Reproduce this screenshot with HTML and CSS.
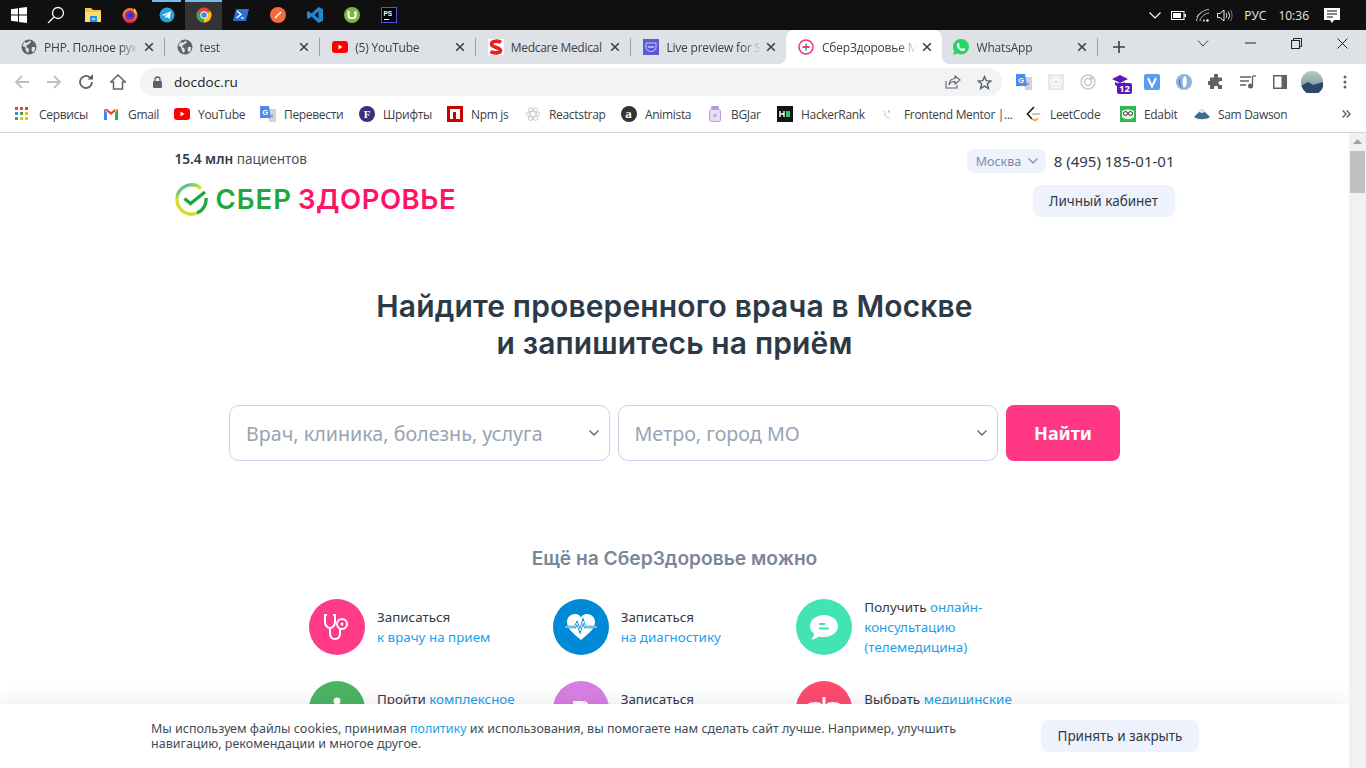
FILE: index.html
```html
<!DOCTYPE html>
<html lang="ru">
<head>
<meta charset="utf-8">
<title>СберЗдоровье</title>
<link rel="stylesheet" href="styles.css">
</head>
<body>
<div class="screen">
  <div class="taskbar">
    <div class="tb-cell"><svg width="16" height="16" viewBox="0 0 16 16" fill="#fff"><path d="M0 2.2 7 1.2V7.5H0zM8 1 16 0V7.5H8zM0 8.5H7V14.800L0 13.800zM8 8.500H16V16L8 15z"/></svg></div>
    <div class="tb-cell"><svg width="18" height="18" viewBox="0 0 18 18" fill="none" stroke="#fff" stroke-width="1.300"><circle cx="11" cy="7" r="5.500"/><path d="M7 11 1 17"/></svg></div>
    <div class="tb-cell"><svg width="18" height="16" viewBox="0 0 18 16"><path d="M1 1H7L9 3H17V15H1z" fill="#f6c544"/><path d="M1 5H17V15H1z" fill="#fbdc70"/><path d="M6 9H13V15H6z" fill="#2b8fd8"/><path d="M8 11H11V13H8z" fill="#9fd3f4"/></svg></div>
    <div class="tb-cell"><svg width="16" height="16" viewBox="0 0 16 16"><circle cx="8" cy="8.500" r="7.500" fill="#ff7a1f"/><path d="M12 1c2 2 3 4 3 6l-3-1z" fill="#ffc21f"/><circle cx="8" cy="8.500" r="5" fill="#7b2fd0"/><path d="M1 9C1 15 6 16 8 16c4 0 7-3 7-7-1 3-3 5-7 5-3 0-5-2-7-5z" fill="#e3174f"/><circle cx="8.500" cy="8" r="2.500" fill="#4a2bb8"/></svg></div>
    <div class="tb-cell tb-open"><svg width="16" height="16" viewBox="0 0 16 16"><circle cx="8" cy="8" r="7.500" fill="#2aa1da"/><path d="M3 8 12 4.300 10.500 12 7.700 10 6.300 11.300 6.200 9.200 10 5.800 5.200 8.800z" fill="#fff"/></svg></div>
    <div class="tb-cell tb-open tb-active"><svg width="16" height="16" viewBox="0 0 16 16"><circle cx="8" cy="8" r="7.500" fill="#e8453c"/><path d="M8 8 14.500 4.300A7.500 7.500 0 0 1 8 15.500z" fill="#fbc116"/><path d="M8 8 8 15.500A7.500 7.500 0 0 1 1.500 4.300z" fill="#34a853"/><circle cx="8" cy="8" r="3.700" fill="#fff"/><circle cx="8" cy="8" r="2.800" fill="#4285f4"/></svg></div>
    <div class="tb-cell"><svg width="16" height="14" viewBox="0 0 16 14"><path d="M3 1H16L13 13H0z" fill="#2f6fd0"/><path d="M4 3 8 6.500 3.500 10" fill="none" stroke="#fff" stroke-width="1.300"/><path d="M8 10H11" stroke="#fff" stroke-width="1.200"/></svg></div>
    <div class="tb-cell"><svg width="16" height="16" viewBox="0 0 16 16"><circle cx="8" cy="8" r="8" fill="#f26c3d"/><path d="M5 11 11 5" stroke="#fff" stroke-width="1.500"/></svg></div>
    <div class="tb-cell"><svg width="16" height="16" viewBox="0 0 16 16"><path d="M11.500 0 16 2.200V13.800L11.500 16 4.500 9.500 1.500 12 0 11V5L1.500 4 4.500 6.500zM11.500 4.500 7.500 8 11.500 11.500z" fill="#1f8ad2"/></svg></div>
    <div class="tb-cell"><svg width="16" height="16" viewBox="0 0 16 16"><circle cx="8" cy="8" r="8" fill="#76b83f"/><path d="M4.500 4V9C4.500 12 11.500 12 11.500 9V5" fill="none" stroke="#fff" stroke-width="2"/><path d="M10 6 11.500 3.500 13 6z" fill="#fff"/></svg></div>
    <div class="tb-cell"><svg width="16" height="16" viewBox="0 0 16 16"><rect x=".5" y=".5" width="15" height="15" fill="#000" stroke="#5a50e8"/><path d="M3 12.500H8" stroke="#fff"/><text x="2.500" y="8.500" class="ps-text">PS</text></svg></div>
    <div class="tray">
      <svg class="tray-chev" width="12" height="7" viewBox="0 0 12 7" fill="none" stroke="#fff" stroke-width="1.100"><path d="M.5.500 6 6 11.500.500"/></svg>
      <svg class="tray-batt" width="15" height="9" viewBox="0 0 15 9"><rect x=".5" y=".5" width="12.500" height="8" fill="none" stroke="#fff"/><rect x="2" y="2" width="8" height="5" fill="#fff"/><rect x="13.500" y="3" width="1.500" height="3" fill="#fff"/></svg>
      <svg class="tray-wifi" width="14" height="13" viewBox="0 0 14 13" fill="none" stroke="#bbb"><path d="M.5 8C3 5 3.500 4.500 6 3"/><path d="M.5 12C1 6 7 .5 13 .5"/><path d="M4 12C4 9 8 4.500 13 4"/><circle cx="11.500" cy="11.500" r="1.200" fill="#fff" stroke="none"/><circle cx="8" cy="11.500" r="1" fill="#ddd" stroke="none"/></svg>
      <svg class="tray-vol" width="16" height="13" viewBox="0 0 16 13" fill="none" stroke="#fff" stroke-width=".9"><path d="M.5 4.500H3L7 1V12L3 8.500H.5z"/><path d="M9 4C10 5.500 10 7.500 9 9"/><path d="M11 2.500C13 5 13 8 11 10.500"/><path d="M13.500 1C15.500 4.500 15.500 8.500 13.500 12" stroke="#888"/></svg>
      <span class="tray-lang">РУС</span>
      <span class="tray-time">10:36</span>
      <svg class="tray-note" width="16" height="15" viewBox="0 0 16 15"><path d="M0 0H16V12H10L8 15 6 12H0z" fill="#fff"/><path d="M3 3H13M3 6H13M3 9H9" stroke="#111"/></svg>
    </div>
  </div>

  <div class="tabstrip">
    <div class="tab">
      <svg class="fav" viewBox="0 0 16 16"><use href="#globe"/></svg>
      <span class="tab-title">PHP. Полное руководство</span><svg class="tab-x" viewBox="0 0 10 10"><use href="#x"/></svg>
    </div>
    <div class="tab">
      <svg class="fav" viewBox="0 0 16 16"><use href="#globe"/></svg>
      <span class="tab-title">test</span><svg class="tab-x" viewBox="0 0 10 10"><use href="#x"/></svg>
    </div>
    <div class="tab">
      <svg class="fav" viewBox="0 0 16 16"><use href="#yt"/></svg>
      <span class="tab-title">(5) YouTube</span><svg class="tab-x" viewBox="0 0 10 10"><use href="#x"/></svg>
    </div>
    <div class="tab">
      <svg class="fav" viewBox="0 0 16 16"><rect width="16" height="16" fill="#fff"/><path d="M13 3.500C10.500 1.500 4 1.500 3.500 5S12.500 8.500 12.500 11.500 5.500 14.500 2.500 12.500" fill="none" stroke="#e1251b" stroke-width="3.600"/></svg>
      <span class="tab-title tab-title-full">Medcare Medical</span><svg class="tab-x" viewBox="0 0 10 10"><use href="#x"/></svg>
    </div>
    <div class="tab tab-last">
      <svg class="fav" viewBox="0 0 16 16"><rect width="16" height="16" fill="#5b5bd6"/><path d="M3 4H13V8C13 14 3 14 3 8z" fill="none" stroke="#c7c9f5"/><path d="M5 8H11" stroke="#fff"/></svg>
      <span class="tab-title">Live preview for Sber</span><svg class="tab-x" viewBox="0 0 10 10"><use href="#x"/></svg>
    </div>
    <div class="tab tab-active">
      <svg class="fav" viewBox="0 0 16 16"><circle cx="8" cy="8" r="7" fill="none" stroke="#ff2d78" stroke-width="1.500"/><path d="M8 4.500V11.500" stroke="#2dc6e8" stroke-width="2"/><path d="M4.500 8H11.500" stroke="#ff2d78" stroke-width="2"/></svg>
      <span class="tab-title">СберЗдоровье Москва</span><svg class="tab-x" viewBox="0 0 10 10"><use href="#x"/></svg>
    </div>
    <div class="tab tab-wa">
      <svg class="fav" viewBox="0 0 16 16"><path d="M8 0a8 7.800 0 0 1 0 15.600c-1.300 0-2.600-.3-3.800-1L0 16l1.300-4A8 7.800 0 0 1 8 0z" fill="#2bd366"/><path d="M5 4c1-.8 1.500 1.500 1.700 2 .1.500-.7 1-.5 1.400.7 1.200 1.500 2 2.700 2.500.5.100.9-.9 1.300-.8.500.2 2 .8 2 1.200 0 1.500-2 2-3 1.600C6.500 11.200 4.700 9.500 4 7.200 3.700 6 4 4.800 5 4z" fill="#fff"/></svg>
      <span class="tab-title">WhatsApp</span><svg class="tab-x" viewBox="0 0 10 10"><use href="#x"/></svg>
    </div>
    <svg class="tab-plus" width="12" height="12" viewBox="0 0 12 12"><path d="M6 0V12M0 6H12" stroke="#3c4043" stroke-width="1.600"/></svg>
    <div class="win-btns">
      <svg class="win-chev" width="12" height="7" viewBox="0 0 12 7" fill="none" stroke="#3c4043"><path d="M1 .5 6 6 11 .5"/></svg>
      <svg width="11" height="2" viewBox="0 0 11 2"><path d="M0 1H11" stroke="#222"/></svg>
      <svg width="11" height="11" viewBox="0 0 11 11" fill="none" stroke="#222"><rect x=".5" y="2.500" width="8" height="8"/><path d="M2.500 2.500V.5H10.500V8.500H8.500"/></svg>
      <svg width="11" height="11" viewBox="0 0 11 11" stroke="#222"><path d="M.5.500 10.500 10.500M10.500.500 .5 10.500"/></svg>
    </div>
  </div>

  <div class="toolbar">
    <svg class="nav nav-off" viewBox="0 0 16 16"><path d="M15 8H2M8 2 2 8l6 6" fill="none" stroke-width="1.800"/></svg>
    <svg class="nav nav-off" viewBox="0 0 16 16"><path d="M1 8H14M8 2l6 6-6 6" fill="none" stroke-width="1.800"/></svg>
    <svg class="nav" viewBox="0 0 16 16"><path d="M14 8A6 6 0 1 1 12 3.500" fill="none" stroke-width="1.800"/><path d="M9.500 5.500H15V0z" fill="#5f6368" stroke="none"/></svg>
    <svg class="nav" viewBox="0 0 16 16"><path d="M8 1 .8 8H3.500V15H12.500V8H15.200z" fill="none" stroke-width="1.500"/></svg>
    <div class="omnibox">
      <svg class="lock" width="10" height="12" viewBox="0 0 10 12"><rect y="5" width="9" height="7" rx="1" fill="#5f6368"/><path d="M2 5V3.500a2.500 2.500 0 0 1 5 0V5" fill="none" stroke="#5f6368" stroke-width="1.300"/></svg>
      <span class="url">docdoc.ru</span>
      <svg class="omni-share" width="16" height="14" viewBox="0 0 16 14" fill="none" stroke="#5f6368" stroke-width="1.100"><path d="M1 6V13H12V10"/><path d="M10 1 15 5 10 9V6.500C7 6.500 5 7.500 4 10 4 6 6.500 3.800 10 3.500z"/></svg>
      <svg class="omni-star" width="15" height="15" viewBox="0 0 15 15" fill="none" stroke="#5f6368" stroke-width="1.400"><path d="M7.500 1.500 9.300 5.700 13.800 6 10.300 9 11.400 13.500 7.500 11.100 3.600 13.500 4.700 9 1.200 6 5.700 5.700z"/></svg>
    </div>
    <div class="exts">
      <svg class="ext" viewBox="0 0 16 16"><use href="#gt"/></svg>
      <svg class="ext" viewBox="0 0 16 16"><rect width="16" height="16" fill="#e8e8e8"/><g fill="none" stroke="#fff"><ellipse cx="8" cy="8" rx="6.500" ry="2.500"/><ellipse cx="8" cy="8" rx="6.500" ry="2.500" transform="rotate(60 8 8)"/><ellipse cx="8" cy="8" rx="6.500" ry="2.500" transform="rotate(120 8 8)"/></g></svg>
      <svg class="ext" viewBox="0 0 16 16" fill="none" stroke="#c8c8c8" stroke-width="1.500"><circle cx="8" cy="8" r="7"/><circle cx="8" cy="8" r="3.500"/><circle cx="11" cy="4.500" r="1" fill="#aaa"/></svg>
      <div class="ext ext-badge"><svg class="ext" viewBox="0 0 16 16"><path d="M8 1 16 5 8 9 0 5z" fill="#5a17b8"/><path d="M3 8V11L8 13.500 13 11V8L8 10.500z" fill="#5a17b8"/></svg><span class="badge">12</span></div>
      <svg class="ext" viewBox="0 0 16 16"><rect width="16" height="16" rx="2" fill="#5a9cf0"/><path d="M4 4 8 12.500 12 4" fill="none" stroke="#fff" stroke-width="2"/></svg>
      <svg class="ext" viewBox="0 0 16 16"><circle cx="8" cy="8" r="8" fill="#8fb3dc"/><path d="M9 2C6 4 6 11 8 14 11 12 12 5 9 2z" fill="#fff"/><path d="M4 4C2 7 3 12 6 14 4 11 4 7 4 4z" fill="#3f72b5"/></svg>
      <svg class="ext" viewBox="0 0 16 16"><path d="M6 1.500a2 2 0 0 1 4 0V3.500H14V7h-1.500a2 2 0 0 0 0 4H14v4H10v-1.300a2 2 0 0 0-4 0V15H2V11H.8a2 2 0 0 1 0-4H2V3.500H6z" fill="#5f6368"/></svg>
      <svg class="ext" viewBox="0 0 16 16"><path d="M0 3H11M0 7H9M0 11H6" stroke="#5f6368" stroke-width="1.300"/><path d="M12.500 2V12" stroke="#5f6368" stroke-width="1.300"/><path d="M12.500 2H16" stroke="#5f6368" stroke-width="1.300"/><circle cx="10.500" cy="12" r="2.500" fill="#5f6368"/></svg>
      <svg class="ext" viewBox="0 0 16 16"><path d="M1 1H15V15H1zM2.500 2.500V13.500H9.500V2.500z" fill="#5f6368" fill-rule="evenodd"/><rect x="10" y="2" width="4" height="12" fill="#5f6368"/></svg>
      <svg class="avatar" viewBox="0 0 22 22"><defs><linearGradient id="sky" x1="0" y1="0" x2="0" y2="1"><stop offset="0" stop-color="#b7c9c8"/><stop offset=".55" stop-color="#8ea7ad"/><stop offset="1" stop-color="#33506e"/></linearGradient></defs><circle cx="11" cy="11" r="11" fill="url(#sky)"/><path d="M0 15 7 11 12 14 22 11V16A11 11 0 0 1 1 16z" fill="#2f4767"/></svg>
      <svg class="menu" width="4" height="14" viewBox="0 0 4 14" fill="#5f6368"><circle cx="2" cy="2" r="1.500"/><circle cx="2" cy="7" r="1.500"/><circle cx="2" cy="12" r="1.500"/></svg>
    </div>
  </div>

  <div class="bookmarks">
    <div class="bm"><svg class="bm-ic" viewBox="0 0 16 16"><g><rect x="0" y="1" width="3" height="3" fill="#ea4335"/><rect x="5" y="1" width="3" height="3" fill="#ea4335"/><rect x="10" y="1" width="3" height="3" fill="#ea4335"/><rect x="0" y="6" width="3" height="3" fill="#4285f4"/><rect x="5" y="6" width="3" height="3" fill="#34a853"/><rect x="10" y="6" width="3" height="3" fill="#fbbc05"/><rect x="0" y="11" width="3" height="3" fill="#34a853"/><rect x="5" y="11" width="3" height="3" fill="#fbbc05"/><rect x="10" y="11" width="3" height="3" fill="#fbbc05"/></g></svg>Сервисы</div>
    <div class="bm"><svg class="bm-ic" viewBox="0 0 16 16"><path d="M0 3V14H3V7z" fill="#4285f4"/><path d="M14 3V14H11V7z" fill="#34a853"/><path d="M0 3 7 9 14 3 11 3 7 6 3 3z" fill="#ea4335"/><path d="M11 3H14L11 7z" fill="#fbbc05"/></svg>Gmail</div>
    <div class="bm"><svg class="bm-ic" viewBox="0 0 16 16"><use href="#yt"/></svg>YouTube</div>
    <div class="bm"><svg class="bm-ic" viewBox="0 0 16 16"><use href="#gt"/></svg>Перевести</div>
    <div class="bm"><svg class="bm-ic" viewBox="0 0 16 16"><circle cx="8" cy="8" r="8" fill="#3d2e78"/><text x="4.700" y="12" class="f-text">F</text></svg>Шрифты</div>
    <div class="bm"><svg class="bm-ic" viewBox="0 0 16 16"><path d="M0 0H16V16H0zM3 3V13H6V6H9V13H13V3z" fill="#cb0000" fill-rule="evenodd"/></svg>Npm js</div>
    <div class="bm"><svg class="bm-ic" viewBox="0 0 16 16"><g fill="none" stroke="#c5ced6"><ellipse cx="8" cy="8" rx="7" ry="2.800"/><ellipse cx="8" cy="8" rx="7" ry="2.800" transform="rotate(60 8 8)"/><ellipse cx="8" cy="8" rx="7" ry="2.800" transform="rotate(120 8 8)"/></g></svg>Reactstrap</div>
    <div class="bm"><svg class="bm-ic" viewBox="0 0 16 16"><circle cx="8" cy="8" r="8" fill="#333"/><text x="4.300" y="12" class="a-text">a</text></svg>Animista</div>
    <div class="bm"><svg class="bm-ic" viewBox="0 0 16 16"><rect x="4" y="0" width="8" height="3" rx="1" fill="#b69ae0"/><rect x="2.500" y="3.500" width="11" height="12" rx="2" fill="#e8dcf8" stroke="#b69ae0"/><circle cx="8" cy="9.500" r="1.500" fill="#b69ae0"/></svg>BGJar</div>
    <div class="bm"><svg class="bm-ic" viewBox="0 0 16 16"><rect width="16" height="16" fill="#0d141c"/><path d="M3 5V11M7 5V11M3 8H7" stroke="#fff" stroke-width="1.400"/><rect x="9" y="5" width="4" height="6" fill="#2ec866"/></svg>HackerRank</div>
    <div class="bm"><svg class="bm-ic" viewBox="0 0 16 16" fill="none" stroke="#b7c5e0"><path d="M5 5C4 9 6 12 10 12"/><path d="M9 4V7M8 5.500H10" stroke="#8fd0e8"/></svg>Frontend Mentor |...</div>
    <div class="bm"><svg class="bm-ic" viewBox="0 0 16 16" fill="none"><path d="M8 1 1.500 8 6 13" stroke="#222" stroke-width="1.700"/><path d="M6 13 9.500 14.500 12 12" stroke="#f89f1b" stroke-width="1.700"/><path d="M6 8H14" stroke="#b3b3b3" stroke-width="1.500"/></svg>LeetCode</div>
    <div class="bm"><svg class="bm-ic" viewBox="0 0 16 16"><rect width="16" height="16" fill="#2fb84f"/><path d="M2 5C5 3 11 3 14 5V11C11 14 5 14 2 11z" fill="#eef3e9"/><g fill="none" stroke="#333"><circle cx="5.500" cy="7.500" r="2"/><circle cx="10.500" cy="7.500" r="2"/></g></svg>Edabit</div>
    <div class="bm"><svg class="bm-ic" viewBox="0 0 16 16"><path d="M0 11 8 3 16 11C12 14 4 14 0 11z" fill="#3c6f8f"/><path d="M5 6 8 3 11 6 8 7z" fill="#e8eef2"/></svg>Sam Dawson</div>
    <svg class="bm-more" width="9" height="8" viewBox="0 0 9 8" fill="none" stroke="#5f6368" stroke-width="1.400"><path d="M.7.500 4 4 .7 7.500M4.700.500 8 4 4.700 7.500"/></svg>
  </div>

  <div class="viewport">
    <main class="page">
      <div class="wrap">
        <header class="head">
          <div class="head-left">
            <p class="patients"><b>15.4 млн</b> пациентов</p>
            <div class="logo">
              <svg width="33" height="33" viewBox="0 0 33 33"><defs><linearGradient id="ring2" x1="0" y1="0" x2="1" y2="1"><stop offset="0" stop-color="#12a8e0"/><stop offset=".55" stop-color="#d6e42a"/><stop offset="1" stop-color="#f2e52a"/></linearGradient></defs><path d="M26 5.500A14.500 14.500 0 0 0 2 16.500" fill="none" stroke="url(#ring2)" stroke-width="3.400"/><path d="M2 16.500A14.500 14.500 0 0 0 22 30" fill="none" stroke="#d7dd2b" stroke-width="3.400"/><path d="M22 30A14.500 14.500 0 0 0 31 15" fill="none" stroke="#1ea83c" stroke-width="3.400"/><path d="M9.500 15.500 15.500 20.500 30 9" fill="none" stroke="#1ea83c" stroke-width="3.400"/></svg>
              <span class="logo-a">СБЕР</span><span class="logo-b">ЗДОРОВЬЕ</span>
            </div>
          </div>
          <div class="head-right">
            <div class="head-contact">
              <div class="city">Москва<svg width="10" height="6" viewBox="0 0 10 6" fill="none" stroke="#7d8aa5" stroke-width="1.200"><path d="M.5.500 5 5 9.500.500"/></svg></div>
              <span class="phone">8 (495) 185-01-01</span>
            </div>
            <div class="cabinet">Личный кабинет</div>
          </div>
        </header>

        <h1 class="title">Найдите проверенного врача в Москве<br>и запишитесь на приём</h1>

        <form class="search">
          <div class="field"><span class="ph">Врач, клиника, болезнь, услуга</span><svg width="10" height="6" viewBox="0 0 10 6" fill="none" stroke="#5d6878" stroke-width="1.400"><path d="M.5.500 5 5 9.500.500"/></svg></div>
          <div class="field"><span class="ph">Метро, город МО</span><svg width="10" height="6" viewBox="0 0 10 6" fill="none" stroke="#5d6878" stroke-width="1.400"><path d="M.5.500 5 5 9.500.500"/></svg></div>
          <div class="find">Найти</div>
        </form>

        <h2 class="more">Ещё на СберЗдоровье можно</h2>

        <div class="services">
          <div class="svc">
            <div class="circle c-pink"><svg width="32" height="32" viewBox="0 0 32 32" fill="none" stroke="#fff" stroke-width="2"><path d="M6 4H4V11C4 15 7 17 9 17S14 15 14 11V4H12"/><path d="M9 17V22C9 26 11 28 14 28S19 26 19 22V18"/><circle cx="21" cy="13" r="5"/><circle cx="21" cy="13" r="1.500" fill="#fff" stroke="none"/></svg></div>
            <p class="svc-text svc-top">Записаться<br><a>к врачу на прием</a></p>
          </div>
          <div class="svc">
            <div class="circle c-blue"><svg width="32" height="28" viewBox="0 0 32 28"><path d="M16 27C8 20 2 16 2 9 2 4 6 1 10 1c3 0 5 1.500 6 3.500C17 2.500 19 1 22 1c4 0 8 3 8 8 0 7-6 11-14 18z" fill="#fff"/><path d="M0 14H10L12 10 15 18 18 8 20 14H32" fill="none" stroke="#0089d6" stroke-width="2.400"/><path d="M0 14H10L12 10 15 18 18 8 20 14H32" fill="none" stroke="#fff" stroke-width=".9"/></svg></div>
            <p class="svc-text svc-top">Записаться<br><a>на диагностику</a></p>
          </div>
          <div class="svc">
            <div class="circle c-teal"><svg width="30" height="28" viewBox="0 0 30 28"><path d="M15 2C23 2 29 7 29 13S23 24 15 24C13 24 11 24 10 23.500 8 25 5 26.500 2 26.500 4 24.500 5 22.500 5 20.500 2.500 18.500 1 16 1 13 1 7 7 2 15 2z" fill="#fff"/><path d="M10 11H16M10 15.500H20" stroke="#43e4b4" stroke-width="2"/></svg></div>
            <p class="svc-text">Получить <a>онлайн-<br>консультацию<br>(телемедицина)</a></p>
          </div>
          <div class="svc">
            <div class="circle c-green"><svg width="32" height="32" viewBox="0 0 32 32" fill="#fff"><circle cx="16" cy="8" r="3.500"/><path d="M7 13H25V16H7z"/></svg></div>
            <p class="svc-text svc-top">Пройти <a>комплексное</a></p>
          </div>
          <div class="svc">
            <div class="circle c-violet"><svg width="32" height="32" viewBox="0 0 32 32"><path d="M8 8V28H24V14L18 8z" fill="#fff"/><path d="M19.500 7 25 12.500H19.500z" fill="#fff"/></svg></div>
            <p class="svc-text svc-top">Записаться</p>
          </div>
          <div class="svc">
            <div class="circle c-red"><svg width="36" height="32" viewBox="0 0 36 32" fill="#fff"><path d="M16.500 4H19.500V30H16.500z"/><path d="M15 10C10 8 5 9 1 11L5 14 3 16 8 17 15 15z"/><path d="M21 10C26 8 31 9 35 11L31 14 33 16 28 17 21 15z"/></svg></div>
            <p class="svc-text svc-top">Выбрать <a>медицинские</a></p>
          </div>
        </div>
      </div>

      <div class="cookies">
        <p class="cookies-text">Мы используем файлы cookies, принимая <a>политику</a> их использования, вы помогаете нам сделать сайт лучше. Например, улучшить навигацию, рекомендации и многое другое.</p>
        <div class="accept">Принять и закрыть</div>
      </div>
    </main>
    <div class="scrollbar">
      <svg class="sb-arrow" width="9" height="5" viewBox="0 0 9 5"><path d="M4.500 0 9 5H0z" fill="#a3a3a3"/></svg>
      <div class="sb-thumb"></div>
    </div>
  </div>
</div>

<svg class="defs" width="0" height="0">
  <symbol id="globe" viewBox="0 0 16 16"><circle cx="8" cy="8" r="7.500" fill="#5f6368"/><path d="M3 3C5 4 6 4 7 3L9 1.500 10 3 8 5 6 6 5 8 7 9 8 11 7 14 5 12 4 8 1.500 7zM11 8H14L14 11 12 13.500 10.500 11z" fill="#dee1e6"/></symbol>
  <symbol id="yt" viewBox="0 0 16 16"><rect y="2" width="16" height="12" rx="3" fill="#f00"/><path d="M6.500 5.500 10.500 8 6.500 10.500z" fill="#fff"/></symbol>
  <symbol id="gt" viewBox="0 0 16 16"><path d="M6 3H16V16H9z" fill="#d0d3d8"/><path d="M0 0H9L11 12H0z" fill="#4a8af4"/><path d="M12 8 13 11 10 10 13 9z" fill="#6f7680"/><text x="2.200" y="8.500" class="g-text">G</text></symbol>
  <symbol id="x" viewBox="0 0 10 10"><path d="M1.200 1.200 8.800 8.800M8.800 1.200 1.200 8.800" stroke="#3c4043" stroke-width="1.600"/></symbol>
</svg>
</body>
</html>
```

FILE: styles.css
```css
* { box-sizing: border-box; }
html, body { margin: 0; padding: 0; height: 100%; overflow: hidden; background: #fff; }
p, h1, h2 { margin: 0; }
.screen { width: 1366px; height: 768px; display: flex; flex-direction: column; font-family: "Open Sans", "Noto Sans", sans-serif; }
.defs { position: absolute; }

/* Windows taskbar */
.taskbar { height: 30px; flex: none; background: #101010; display: flex; align-items: stretch; }
.tb-cell { width: 37px; display: flex; align-items: center; justify-content: center; border-top: 2px solid transparent; padding-bottom: 2px; }
.tb-open { border-top-color: #76b9ed; }
.tb-cell.tb-open:not(.tb-active) { border-image: linear-gradient(90deg, transparent 5px, #76b9ed 5px, #76b9ed 32px, transparent 32px) 1; }
.tb-active { background: #333; }
.ps-text { font: 700 6.500px "Liberation Sans", sans-serif; fill: #fff; }
.tray { margin-left: auto; display: flex; align-items: center; color: #fff; font-size: 12px; font-family: "Open Sans", sans-serif; }
.tray-chev { margin-right: 10px; }
.tray-batt { margin-right: 10px; }
.tray-wifi { margin-right: 7px; }
.tray-vol { margin-right: 11px; }
.tray-lang { margin-right: 12px; color: #e8e8e8; }
.tray-time { margin-right: 15px; color: #e8e8e8; }
.tray-note { margin-right: 26px; }

/* Tab strip */
.tabstrip { height: 34px; flex: none; background: #dee1e6; display: flex; align-items: stretch; padding-left: 8px; position: relative; }
.tab { width: 155.600px; flex: none; display: flex; align-items: center; padding: 0 10px 0 13px; position: relative; font-size: 12px; color: #3c4043; }
.tab::after { content: ""; position: absolute; right: -1px; top: 8px; height: 18px; width: 1px; background: #9aa0a6; }
.tab-last::after { display: none; }
.tab-active { background: #fff; border-radius: 8px 8px 0 0; padding-left: 12px; }
.tab-active::after, .tab-active::before { content: ""; position: absolute; bottom: 0; top: auto; width: 8px; height: 8px; background: radial-gradient(circle at var(--cx) 0, #dee1e6 8px, #fff 8px); }
.tab-active::before { left: -8px; --cx: 0; }
.tab-active::after { right: -8px; --cx: 8px; }
.tab-wa { padding-left: 11px; }
.fav { width: 16px; height: 16px; flex: none; margin-right: 7px; }
.tab-active .fav { margin-right: 8px; }
.tab-wa .fav { margin-right: 8px; }
.tab-title { flex: 1; white-space: nowrap; overflow: hidden; min-width: 0; -webkit-mask-image: linear-gradient(90deg, #000 80%, transparent 100%); mask-image: linear-gradient(90deg, #000 80%, transparent 100%); letter-spacing: -.2px; }
.tab-title-full { -webkit-mask-image: none; mask-image: none; letter-spacing: -.3px; }
.tab-x { width: 10px; height: 10px; flex: none; margin-left: 5px; }
.tab-plus { align-self: center; margin-left: 16px; flex: none; }
.win-btns { margin-left: auto; display: flex; align-items: center; padding-bottom: 8px; padding-right: 18px; gap: 35px; }
.win-chev { margin-right: 1px; }

/* Toolbar */
.toolbar { height: 36px; flex: none; background: #fff; display: flex; align-items: center; padding-left: 14px; }
.nav { width: 16px; height: 16px; flex: none; margin-right: 16px; stroke: #5f6368; }
.nav-off { stroke: #bdc1c6; }
.omnibox { width: 862px; height: 28px; margin-left: -2px; background: #f1f3f4; border-radius: 14px; display: flex; align-items: center; padding-left: 13px; flex: none; }
.lock { flex: none; margin-right: 11px; }
.url { font-size: 13.500px; color: #202124; letter-spacing: .1px; flex: 1; }
.omni-share { margin-right: 16px; }
.omni-star { margin-right: 10px; }
.exts { display: flex; align-items: center; margin-left: 14px; gap: 16px; }
.ext { width: 16px; height: 16px; flex: none; display: block; }
.ext-badge { position: relative; }
.badge { position: absolute; left: 5px; top: 9px; background: #5a17b8; color: #fff; font-size: 9.500px; font-weight: 700; line-height: 11px; padding: 0 2px; border-radius: 2px; }
.avatar { width: 22px; height: 22px; flex: none; margin-left: -3px; margin-right: -2px; }
.menu { flex: none; margin-left: 6px; }

/* Bookmarks */
.bookmarks { height: 33px; flex: none; background: #fff; border-bottom: 1px solid #d0d3d6; display: grid; grid-template-columns: 89px 70px 86px 99px 88px 78px 96px 86px 70px 103px 146px 94px 74px 149px auto; align-items: center; padding-left: 15px; padding-bottom: 4px; font-size: 12px; color: #3c4043; letter-spacing: -.32px; }
.bm { display: flex; align-items: center; white-space: nowrap; }
.bm-ic { width: 16px; height: 16px; flex: none; margin-right: 8px; }
.bm-more { margin-left: -1px; }
.f-text { font: 700 11px "Liberation Serif", serif; fill: #fff; }
.a-text { font: 700 13px "Liberation Serif", serif; fill: #fff; }
.g-text { font: 700 7.500px "Liberation Sans", sans-serif; fill: #fff; }

/* Page */
.viewport { flex: 1; min-height: 0; display: flex; }
.page { flex: 1; min-width: 0; position: relative; overflow: hidden; background: #fff; font-family: "Noto Sans", "Open Sans", sans-serif; color: #2f3a45; }
.wrap { width: 1000px; margin: 0 auto; }
.head { display: flex; justify-content: space-between; padding-top: 16px; }
.patients { font-size: 13.600px; line-height: 20px; color: #47525e; }
.patients b { font-weight: 600; color: #2f3a45; }
.logo { display: flex; align-items: center; margin-top: 14px; height: 33px; }
.logo span { font-family: "Inter", "Noto Sans", sans-serif; font-weight: 600; font-size: 27.500px; line-height: 33px; }
.logo svg { margin-right: 8px; }
.logo-a { color: #1ea83c; margin-right: 6px; letter-spacing: 1px; font-weight: 700; }
.logo-b { color: #ff1268; letter-spacing: .55px; }
.head-right { display: flex; flex-direction: column; align-items: flex-end; }
.head-contact { display: flex; align-items: center; gap: 8px; }
.city { height: 24px; width: 79px; background: #eef2fd; border-radius: 8px; display: flex; align-items: center; padding-left: 9px; gap: 7px; font-size: 12.500px; color: #7d8aa5; }
.phone { font-size: 15px; color: #2f3a45; }
.cabinet { margin-top: 12px; height: 32px; width: 142px; background: #eef2fd; border-radius: 8px; display: flex; align-items: center; justify-content: center; font-size: 13.500px; color: #2f3a45; }
.title { margin-top: 71px; text-align: center; font-family: "Inter", "Noto Sans", sans-serif; font-size: 30px; line-height: 37px; font-weight: 600; letter-spacing: .13px; color: #2c3a47; }
.search { margin: 43px auto 0; width: 891px; display: flex; gap: 8px; height: 56px; }
.field { flex: 1; border: 1px solid #c8d2e8; border-radius: 10px; display: flex; align-items: center; justify-content: space-between; padding: 0 10px 0 16px; }
.ph { font-size: 19.700px; color: #98a3b5; }
.find { width: 114px; flex: none; background: #ff3784; border-radius: 8px; color: #fff; font-size: 18px; font-weight: 700; display: flex; align-items: center; justify-content: center; }
.more { margin-top: 85px; text-align: center; font-size: 19.200px; line-height: 24px; font-weight: 600; color: #7a8798; font-family: "Inter", "Noto Sans", sans-serif; }
.services { width: 731px; margin: 29px auto 0; display: grid; grid-template-columns: repeat(3, 1fr); row-gap: 26px; }
.svc { display: flex; align-items: center; gap: 12px; height: 56px; }
.circle { width: 56px; height: 56px; border-radius: 50%; flex: none; display: flex; align-items: center; justify-content: center; }
.c-pink { background: #ff3b87; }
.c-blue { background: #0089d6; }
.c-teal { background: #43e4b4; }
.c-green { background: #4bb462; }
.c-violet { background: #d97fe2; }
.c-red { background: #ff4a6e; }
.svc-text { font-size: 13.400px; line-height: 20px; color: #2f3a45; white-space: nowrap; }
.svc-top { align-self: flex-start; margin-top: 8px; }
.svc-text a, .cookies-text a { color: #1ba0ec; }

/* Cookie banner */
.cookies { position: absolute; left: 0; right: 0; bottom: 0; height: 64px; background: #fff; box-shadow: 0 0 20px rgba(40, 50, 70, .12); display: flex; align-items: center; padding: 0 150px 0 151px; justify-content: space-between; }
.cookies-text { width: 830px; font-size: 12.500px; line-height: 15px; color: #3f4b57; }
.accept { width: 158px; height: 32px; flex: none; background: #eef2fd; border-radius: 8px; font-size: 13.500px; color: #2f3a45; display: flex; align-items: center; justify-content: center; }

/* Scrollbar */
.scrollbar { width: 17px; flex: none; background: #f1f1f1; display: flex; flex-direction: column; align-items: center; padding-top: 6px; }
.sb-thumb { width: 15px; height: 42px; margin-top: 7px; background: #c1c1c1; }
```
